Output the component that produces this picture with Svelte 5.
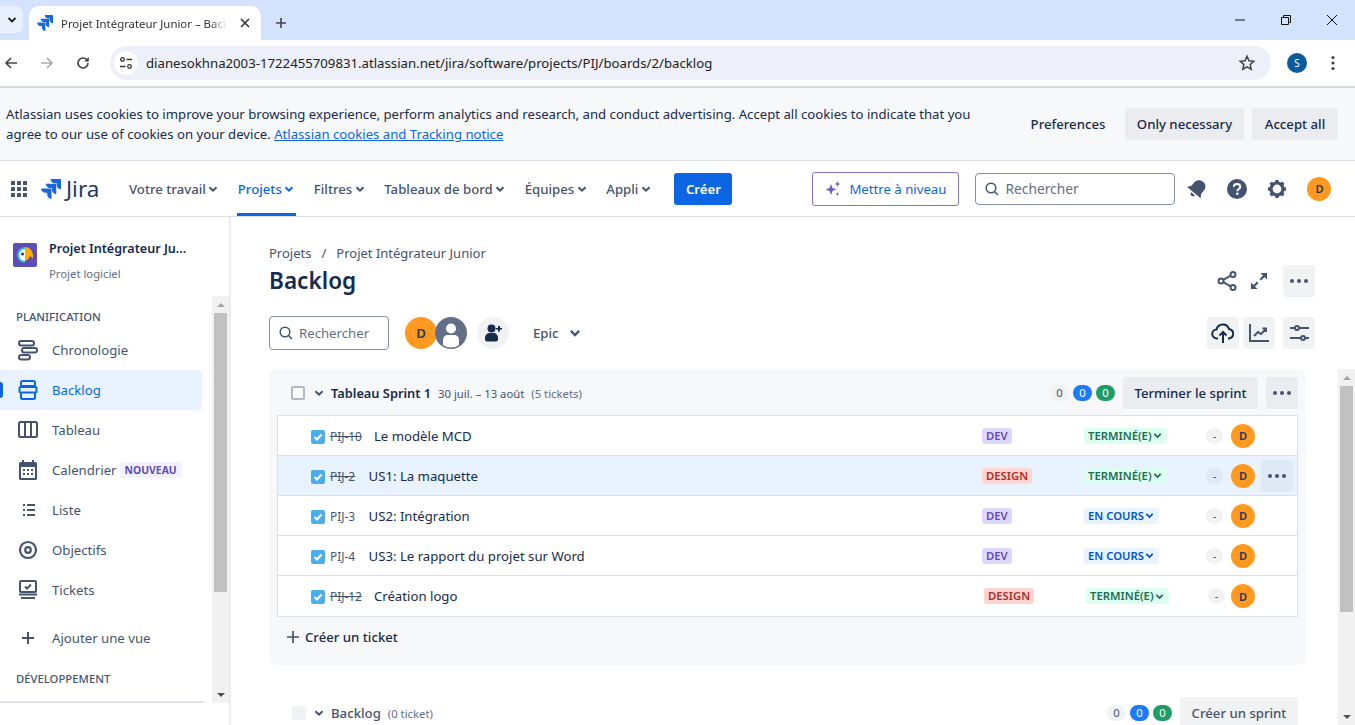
<script>
  const jira = `<path d="M23 0H11.5c0 2.9 2.4 5.2 5.2 5.2h2.1v2.1c0 2.9 2.4 5.2 5.2 5.2V1c0-.6-.4-1-1-1z"/><path transform="translate(-5.7 5.7)" d="M23 0H11.5c0 2.9 2.4 5.2 5.2 5.2h2.1v2.1c0 2.9 2.4 5.2 5.2 5.2V1c0-.6-.4-1-1-1z"/><path transform="translate(-11.4 11.4)" d="M23 0H11.5c0 2.9 2.4 5.2 5.2 5.2h2.1v2.1c0 2.9 2.4 5.2 5.2 5.2V1c0-.6-.4-1-1-1z"/>`;

  const topNav = [
    { label: "Votre travail" },
    { label: "Projets", active: true },
    { label: "Filtres" },
    { label: "Tableaux de bord" },
    { label: "Équipes" },
    { label: "Appli" }
  ];

  const views = [
    { label: "Chronologie", icon: `<g fill="none" stroke="currentColor" stroke-width="2"><rect x="3" y="3" width="15" height="4.5" rx="2.2"/><rect x="6" y="10" width="15" height="4.5" rx="2.2"/><rect x="3" y="17" width="11" height="4.5" rx="2.2"/></g>` },
    { label: "Backlog", active: true, icon: `<g fill="none" stroke="currentColor" stroke-width="2"><rect x="5" y="3" width="14" height="5" rx="1.5"/><rect x="3.5" y="9" width="17" height="5.5" rx="1"/><path d="M5 15v4.5a1.5 1.5 0 0 0 1.500 1.500h11a1.500 1.500 0 0 0 1.500-1.500V15"/></g>` },
    { label: "Tableau", icon: `<g fill="none" stroke="currentColor" stroke-width="2"><rect x="3" y="4" width="18" height="15" rx="1.500"/><path d="M9 4v15M15 4v15"/></g>` },
    { label: "Calendrier", badge: "NOUVEAU", icon: `<path fill="currentColor" d="M6 2h2v2h8V2h2v2h1.500A1.500 1.500 0 0 1 21 5.500v15a1.500 1.500 0 0 1-1.500 1.500h-15A1.500 1.500 0 0 1 3 20.500v-15A1.500 1.500 0 0 1 4.500 4H6zM5 9v11h14V9z"/><g fill="currentColor"><rect x="7" y="11" width="2" height="2"/><rect x="11" y="11" width="2" height="2"/><rect x="15" y="11" width="2" height="2"/><rect x="7" y="15" width="2" height="2"/><rect x="11" y="15" width="2" height="2"/><rect x="15" y="15" width="2" height="2"/></g>` },
    { label: "Liste", icon: `<g fill="currentColor"><rect x="7" y="6" width="2" height="2"/><rect x="7" y="11" width="2" height="2"/><rect x="7" y="16" width="2" height="2"/><rect x="11" y="6" width="8" height="2"/><rect x="11" y="11" width="8" height="2"/><rect x="11" y="16" width="8" height="2"/></g>` },
    { label: "Objectifs", icon: `<g fill="none" stroke="currentColor" stroke-width="2.200"><circle cx="12" cy="12" r="8"/><circle cx="12" cy="12" r="2.800"/></g>` },
    { label: "Tickets", icon: `<g fill="none" stroke="currentColor" stroke-width="2"><rect x="4" y="3" width="16" height="11" rx="1"/><path d="m9 8.500 2 2 4-4M3 16.500h18M5 20h14"/></g>` }
  ];

  const tickets = [
    { key: "PIJ-10", title: "Le modèle MCD", tag: "DEV", status: "TERMINÉ(E)", done: true },
    { key: "PIJ-2", title: "US1: La maquette", tag: "DESIGN", status: "TERMINÉ(E)", done: true, hover: true },
    { key: "PIJ-3", title: "US2: Intégration", tag: "DEV", status: "EN COURS" },
    { key: "PIJ-4", title: "US3: Le rapport du projet sur Word", tag: "DEV", status: "EN COURS" },
    { key: "PIJ-12", title: "Création logo", tag: "DESIGN", status: "TERMINÉ(E)", done: true, nudge: true }
  ];
</script>

{#snippet chev(size = 12)}
  <svg class="chev" width={size} height={size} viewBox="0 0 12 12"><path d="M2.500 4.200 6 7.700l3.500-3.500" fill="none" stroke="currentColor" stroke-width="2"/></svg>
{/snippet}

{#snippet dots()}
  <svg width="20" height="6" viewBox="0 0 20 6"><circle cx="3" cy="3" r="2" fill="currentColor"/><circle cx="10" cy="3" r="2" fill="currentColor"/><circle cx="17" cy="3" r="2" fill="currentColor"/></svg>
{/snippet}

{#snippet lens()}
  <svg width="16" height="16" viewBox="0 0 16 16"><circle cx="7" cy="7" r="4.800" fill="none" stroke="#44546f" stroke-width="1.500"/><path d="m10.500 10.500 3.500 3.500" stroke="#44546f" stroke-width="1.500"/></svg>
{/snippet}

{#snippet counts()}
  <div class="counts">
    <span class="count grey">0</span>
    <span class="count blue">0</span>
    <span class="count green">0</span>
  </div>
{/snippet}

{#snippet scrollbar(kind)}
  <div class="sb {kind}">
    <span class="arrow up"></span>
    <span class="thumb"></span>
    <span class="spring"></span>
    <span class="arrow down"></span>
  </div>
{/snippet}

<div class="app">
  <div class="tabstrip">
    <div class="tabsearch">
      <svg width="12" height="12" viewBox="0 0 12 12"><path d="M2.500 4 6 7.500 9.500 4" fill="none" stroke="#1f1f1f" stroke-width="1.800"/></svg>
    </div>
    <div class="tab">
      <svg class="favicon" width="16" height="16" viewBox="0 0 24 24" fill="#1868db">{@html jira}</svg>
      <span class="tabtitle">Projet Intégrateur Junior – Backlog</span>
      <svg width="12" height="12" viewBox="0 0 12 12"><path d="m2 2 8 8M10 2l-8 8" stroke="#333" stroke-width="1.600"/></svg>
    </div>
    <svg class="newtab" width="12" height="12" viewBox="0 0 12 12"><path d="M6 1v10M1 6h10" stroke="#444" stroke-width="1.600"/></svg>
    <div class="winctl">
      <svg width="12" height="12" viewBox="0 0 12 12"><path d="M1 6h10" stroke="#111" stroke-width="1"/></svg>
      <svg width="12" height="12" viewBox="0 0 12 12"><path d="M3.500 3V1.500h7v7H9M1.500 3.500h7v7h-7z" fill="none" stroke="#111"/></svg>
      <svg width="12" height="12" viewBox="0 0 12 12"><path d="m1 1 10 10M11 1 1 11" stroke="#111"/></svg>
    </div>
  </div>

  <div class="toolbar">
    <svg width="16" height="16" viewBox="0 0 16 16"><path d="M14 8H3M8 3 3 8l5 5" fill="none" stroke="#444" stroke-width="1.600"/></svg>
    <svg class="fwd" width="16" height="16" viewBox="0 0 16 16"><path d="M2 8h11M8 3l5 5-5 5" fill="none" stroke="#aaa" stroke-width="1.600"/></svg>
    <svg class="reload" width="16" height="16" viewBox="0 0 16 16"><path d="M13 8a5 5 0 1 1-1.500-3.600L13 6" fill="none" stroke="#444" stroke-width="1.600"/><path d="M13.800 2v4.600H9.200z" fill="#444"/></svg>
    <div class="omnibox">
      <span class="siteinfo">
        <svg width="14" height="14" viewBox="0 0 14 14" fill="none" stroke="#333" stroke-width="1.300"><circle cx="3.500" cy="3.500" r="1.800"/><path d="M7.500 3.500H13M1 10.500h5.500"/><circle cx="10.500" cy="10.500" r="1.800"/></svg>
      </span>
      <span class="url">dianesokhna2003-1722455709831.atlassian.net/jira/software/projects/PIJ/boards/2/backlog</span>
      <svg width="18" height="18" viewBox="0 0 18 18"><path d="m9 2.200 2 4.500 4.800.5-3.600 3.200 1 4.800L9 12.800l-4.200 2.400 1-4.800L2.200 7.200 7 6.700z" fill="none" stroke="#444" stroke-width="1.500"/></svg>
    </div>
    <span class="profile">S</span>
    <svg class="kebab" width="4" height="16" viewBox="0 0 4 16" fill="#444"><circle cx="2" cy="2.500" r="1.600"/><circle cx="2" cy="8" r="1.600"/><circle cx="2" cy="13.500" r="1.600"/></svg>
  </div>

  <div class="cookies">
    <p>Atlassian uses cookies to improve your browsing experience, perform analytics and research, and conduct advertising. Accept all cookies to indicate that you agree to our use of cookies on your device. <a href="#/cookies">Atlassian cookies and Tracking notice</a></p>
    <button class="plain">Preferences</button>
    <button class="only">Only necessary</button>
    <button class="accept">Accept all</button>
  </div>

  <header class="topnav">
    <svg class="apps" width="16" height="16" viewBox="0 0 16 16" fill="#44546f">
      {#each [0, 6, 12] as y}
        {#each [0, 6, 12] as x}
          <rect {x} {y} width="4" height="4" rx="0.5" />
        {/each}
      {/each}
    </svg>
    <svg class="logo" width="20" height="20" viewBox="0 0 24 24" fill="#1868db">{@html jira}</svg>
    <span class="wordmark">Jira</span>
    <nav>
      {#each topNav as item}
        <a href="#/nav" class:active={item.active}>{item.label}{@render chev(12)}</a>
      {/each}
    </nav>
    <button class="create">Créer</button>
    <button class="upgrade">
      <svg width="16" height="16" viewBox="0 0 16 16" fill="#6e5dc6"><path d="M6 3 7.500 7 11.500 8.500 7.500 10 6 14 4.500 10 .5 8.500 4.500 7zM12.500 0l.8 2.200 2.200.8-2.200.8-.8 2.200-.8-2.200L9.500 3l2.200-.8zM12.500 11l.6 1.400 1.400.6-1.400.6-.6 1.400-.6-1.400-1.400-.6 1.400-.6z"/></svg>
      Mettre à niveau
    </button>
    <div class="search global">{@render lens()}<span>Rechercher</span></div>
    <svg class="tool" width="22" height="22" viewBox="0 0 22 22" fill="#44546f"><g transform="rotate(40 11 11)"><path d="M11 1.500c3.800 0 6.300 2.800 6.300 6.300v4.400l2.500 3.600H2.200l2.500-3.600V7.800c0-3.500 2.500-6.300 6.300-6.300z"/><path d="M8.500 17.200h5a2.500 2.500 0 0 1-5 0z"/></g></svg>
    <svg class="tool" width="22" height="22" viewBox="0 0 22 22"><circle cx="11" cy="11" r="10" fill="#44546f"/><path d="M7.800 8.800C7.800 7 9.200 5.900 11 5.900s3.300 1.100 3.300 2.800c0 2.400-3 2.300-3 4.500" fill="none" stroke="#fff" stroke-width="2"/><circle cx="11.300" cy="15.800" r="1.300" fill="#fff"/></svg>
    <svg class="tool" width="22" height="22" viewBox="0 0 22 22"><circle cx="11" cy="11" r="6" fill="none" stroke="#44546f" stroke-width="3.200"/><path d="M11 2v3M11 17v3M2 11h3M17 11h3M4.600 4.600l2.200 2.200M15.200 15.200l2.200 2.200M17.400 4.600l-2.200 2.200M6.800 15.200l-2.200 2.200" stroke="#44546f" stroke-width="3.400"/></svg>
    <span class="avatar me">D</span>
  </header>

  <div class="body">
    <aside>
      <div class="project">
        <svg width="24" height="24" viewBox="0 0 24 24"><rect width="24" height="24" rx="2" fill="#5e4db2"/><path d="M12 4a8 8 0 0 0 0 16z" fill="#2abbd0"/><path d="M12 6a6 6 0 0 0 0 12z" fill="#fff"/><path d="M12 4c4.300 0 7.300 3 8 8v3.500L17 13c-1 2.500-2.800 4.500-5 5z" fill="#ffab00"/><circle cx="9.500" cy="11" r="1.500" fill="#253858"/></svg>
        <div>
          <strong>Projet Intégrateur Ju...</strong>
          <small>Projet logiciel</small>
        </div>
      </div>
      <div class="sidescroll">
        <div class="sidelist">
          <h4 class="plan">PLANIFICATION</h4>
          {#each views as v}
            <a href="#/view" class="view" class:active={v.active}>
              <svg width="24" height="24" viewBox="0 0 24 24">{@html v.icon}</svg>
              <span>{v.label}</span>
              {#if v.badge}<em>{v.badge}</em>{/if}
            </a>
          {/each}
          <a href="#/add" class="view add">
            <svg width="24" height="24" viewBox="0 0 24 24"><path d="M12 6v12M6 12h12" stroke="currentColor" stroke-width="2"/></svg>
            <span>Ajouter une vue</span>
          </a>
          <h4 class="devhead">DÉVELOPPEMENT</h4>
        </div>
        {@render scrollbar("side")}
      </div>
      <div class="sidefoot"></div>
    </aside>

    <main>
      <section class="pagehead">
        <div class="crumbs">Projets<i>/</i>Projet Intégrateur Junior</div>
        <div class="titlerow">
          <h1>Backlog</h1>
          <div class="titletools">
            <svg width="24" height="24" viewBox="0 0 24 24" fill="none" stroke="#44546f" stroke-width="2"><circle cx="18" cy="5.500" r="2.500"/><circle cx="6" cy="12" r="2.500"/><circle cx="18" cy="18.500" r="2.500"/><path d="m8.200 10.800 7.600-4.100M8.200 13.200l7.600 4.100"/></svg>
            <svg class="expand" width="24" height="24" viewBox="0 0 24 24" fill="#44546f"><path d="M13.500 4H20v6.500L17.500 8 14 11.500 12.500 10 16 6.500zM10.500 20H4v-6.500L6.500 16 10 12.500l1.500 1.500L8 17.500z"/></svg>
            <button class="square">{@render dots()}</button>
          </div>
        </div>
        <div class="filters">
          <div class="search">{@render lens()}<span>Rechercher</span></div>
          <div class="people">
            <span class="avatar big">D</span>
            <span class="avatar big ghost">
              <svg width="32" height="32" viewBox="0 0 32 32"><circle cx="16" cy="16" r="16" fill="#626f86"/><circle cx="16" cy="11.500" r="5" fill="#fff"/><path d="M8 28v-5c0-3 2-5 5-5h6c3 0 5 2 5 5v5a14 14 0 0 1-16 0z" fill="#fff"/></svg>
            </span>
          </div>
          <span class="addperson">
            <svg width="20" height="20" viewBox="0 0 20 20" fill="#172b4d"><circle cx="8.500" cy="5.500" r="4"/><path d="M2 15c0-3 2-5 5-5h3c3 0 5 2 5 5v1.500a2 2 0 0 1-2 2H4a2 2 0 0 1-2-2z"/><path d="M15 3h2v2h2v1.500h-2v2h-2v-2h-2V5h2z"/></svg>
          </span>
          <span class="epic">Epic{@render chev(14)}</span>
          <div class="spacer"></div>
          <button class="square dark">
            <svg width="24" height="24" viewBox="0 0 24 24" fill="none" stroke="#172b4d" stroke-width="2"><path d="M7 17.500H6A4.500 4.500 0 0 1 5.500 8.500 6.500 6.500 0 0 1 18 8a4.800 4.800 0 0 1 0 9.500h-1"/><path d="M12 22V11M8.500 14.500 12 11l3.500 3.500"/></svg>
          </button>
          <button class="square chart">
            <svg width="24" height="24" viewBox="0 0 24 24" fill="none" stroke="#44546f" stroke-width="2"><path d="M3 3v17h19"/><path d="m7 15 4-4 3 2 5-5M15.500 7.500H19V11"/></svg>
          </button>
          <button class="square sliders">
            <svg width="24" height="24" viewBox="0 0 24 24" fill="none" stroke="#44546f" stroke-width="2"><path d="M3 7h5M12 7h10M3 17h11M18 17h4"/><circle cx="10" cy="7" r="2"/><circle cx="16" cy="17" r="2"/></svg>
          </button>
        </div>
      </section>

      <div class="scroller">
        <div class="board">
          <section class="sprint">
            <div class="sprinthead">
              <span class="check off"></span>
              {@render chev(12)}
              <strong>Tableau Sprint 1</strong>
              <span class="dates">30 juil. – 13 août</span>
              <span class="num">(5 tickets)</span>
              <div class="spacer"></div>
              {@render counts()}
              <button class="finish">Terminer le sprint</button>
              <button class="square grey">{@render dots()}</button>
            </div>
            <div class="rows">
              {#each tickets as t}
                <div class="row" class:hover={t.hover} class:nudge={t.nudge}>
                  <div class="main-cell">
                    <span class="check on"><svg width="14" height="14" viewBox="0 0 14 14"><path d="m3.500 7 2.500 2.500 4.500-5" fill="none" stroke="#fff" stroke-width="2"/></svg></span>
                    <span class="key" class:strike={t.done}>{t.key}</span>
                    <span class="title">{t.title}</span>
                  </div>
                  <div class="cell"><span class="tag {t.tag.toLowerCase()}">{t.tag}</span></div>
                  <div class="cell"><span class="status" class:done={t.done}>{t.status}{@render chev(11)}</span></div>
                  <div class="cell"><span class="dash">-</span></div>
                  <span class="avatar">D</span>
                  {#if t.hover}<button class="square rowmore">{@render dots()}</button>{/if}
                </div>
              {/each}
            </div>
            <div class="newticket">
              <svg width="14" height="14" viewBox="0 0 14 14"><path d="M7 1v12M1 7h12" stroke="#44546f" stroke-width="1.700"/></svg>
              Créer un ticket
            </div>
          </section>

          <section class="backlog">
            <span class="check faint"></span>
            {@render chev(12)}
            <strong>Backlog</strong>
            <span class="num">(0 ticket)</span>
            <div class="spacer"></div>
            {@render counts()}
            <button class="newsprint">Créer un sprint</button>
          </section>
        </div>
        {@render scrollbar("page")}
      </div>
    </main>
  </div>
</div>

<style>
  :global(body) {
    background: #fff;
    overflow: hidden;
  }

  .app {
    height: 725px;
    display: flex;
    flex-direction: column;
    overflow: hidden;
    font-family: "Noto Sans", "Open Sans", sans-serif;
    font-size: 13.2px;
    color: #172b4d;
  }

  button {
    font: inherit;
    border: none;
    cursor: pointer;
  }

  h1, h4, p {
    margin: 0;
  }

  svg {
    display: block;
    flex: none;
  }

  .spacer {
    flex: 1;
  }

  /* browser chrome */
  .tabstrip {
    height: 40px;
    flex: none;
    display: flex;
    align-items: flex-end;
    background: #d3e3fd;
  }
  .tabsearch {
    width: 23px;
    height: 27px;
    margin-bottom: 7px;
    background: #e8f0fe;
    border-radius: 0 8px 8px 0;
    display: flex;
    align-items: center;
    justify-content: center;
  }
  .tab {
    width: 232px;
    height: 34px;
    margin-left: 6px;
    padding: 0 10px 0 8px;
    box-sizing: border-box;
    background: #fff;
    border-radius: 10px 10px 0 0;
    display: flex;
    align-items: center;
    color: #333;
  }
  .tabtitle {
    width: 166px;
    margin: 0 12px 0 8px;
    font-size: 11.4px;
    white-space: nowrap;
    overflow: hidden;
    -webkit-mask-image: linear-gradient(90deg, #000 90%, transparent);
    mask-image: linear-gradient(90deg, #000 90%, transparent);
  }
  .newtab {
    margin: 0 0 11px 14px;
  }
  .winctl {
    margin: 0 17px 14px auto;
    display: flex;
    gap: 34px;
  }

  .toolbar {
    height: 48px;
    flex: none;
    box-sizing: border-box;
    padding: 0 0 0 3px;
    background: #fff;
    border-bottom: 2px solid #dadada;
    display: flex;
    align-items: center;
  }
  .fwd {
    margin-left: 20px;
  }
  .reload {
    margin-left: 20px;
  }
  .omnibox {
    width: 1161px;
    height: 34px;
    margin-left: 19px;
    box-sizing: border-box;
    padding: 0 15px 0 4px;
    background: #edf0f8;
    border-radius: 17px;
    display: flex;
    align-items: center;
  }
  .siteinfo {
    width: 24px;
    height: 24px;
    border-radius: 50%;
    background: #fff;
    display: flex;
    align-items: center;
    justify-content: center;
  }
  .url {
    flex: 1;
    margin-left: 8px;
    color: #222;
  }
  .profile {
    width: 20px;
    height: 20px;
    margin-left: 16px;
    border-radius: 50%;
    background: #0b5a9e;
    color: #fff;
    font-size: 10px;
    display: flex;
    align-items: center;
    justify-content: center;
  }
  .kebab {
    margin-left: 24px;
  }

  .cookies {
    height: 73px;
    flex: none;
    box-sizing: border-box;
    padding: 0 17px 0 6px;
    background: #f7f8f9;
    border-bottom: 1px solid #dcdfe4;
    display: flex;
    align-items: center;
  }
  .cookies p {
    width: 985px;
    line-height: 20px;
    color: #172b4d;
    font-size: 13.17px;
  }
  .cookies a {
    color: #0c66e4;
  }
  .cookies button {
    height: 32px;
    border-radius: 3px;
    background: #ebecf0;
    color: #172b4d;
    font-weight: 500;
  }
  .cookies .plain {
    width: 94px;
    margin-left: 30px;
    background: none;
  }
  .cookies .only {
    width: 119px;
    margin-left: 10px;
  }
  .cookies .accept {
    width: 86px;
    margin-left: 8px;
  }

  /* jira top bar */
  .topnav {
    height: 56px;
    flex: none;
    box-sizing: border-box;
    border-bottom: 1px solid #dcdfe4;
    display: flex;
    align-items: center;
    padding-left: 11px;
  }
  .logo {
    margin-left: 14px;
  }
  .wordmark {
    margin-left: 5px;
    font-size: 22.4px;
    color: #253858;
    width: 36px;
  }
  nav {
    margin-left: 26px;
    height: 100%;
    display: flex;
    gap: 16.5px;
  }
  nav a {
    display: flex;
    align-items: center;
    gap: 1.5px;
    color: #44546f;
    text-decoration: none;
    font-weight: 500;
    white-space: nowrap;
    box-sizing: border-box;
    padding: 3px 1px 0;
    border-bottom: 3px solid transparent;
  }
  nav a.active {
    color: #0c66e4;
    border-bottom-color: #0c66e4;
  }
  .create {
    width: 58px;
    height: 32px;
    margin-left: 21.5px;
    background: #0c66e4;
    color: #fff;
    border-radius: 3px;
    font-weight: 600;
  }
  .upgrade {
    width: 147px;
    height: 34px;
    margin-left: 80px;
    background: #fff;
    border: 1px solid #8270db;
    border-radius: 3px;
    color: #0c66e4;
    display: flex;
    align-items: center;
    justify-content: center;
    gap: 8px;
  }
  .search {
    width: 120px;
    height: 34px;
    box-sizing: border-box;
    border: 1px solid #8590a2;
    border-radius: 4px;
    display: flex;
    align-items: center;
    gap: 5px;
    padding-left: 8px;
    color: #626f86;
  }
  .search.global {
    width: 200px;
    height: 32px;
    margin-left: 16px;
    margin-right: 11px;
    font-size: 13.8px;
  }
  .tool {
    margin-right: 18px;
  }
  .avatar {
    width: 24px;
    height: 24px;
    flex: none;
    border-radius: 50%;
    background: #ff991f;
    color: #253858;
    font-size: 11px;
    font-weight: 600;
    display: flex;
    align-items: center;
    justify-content: center;
  }
  .avatar.me {
    margin-left: 1px;
  }

  .body {
    flex: 1;
    min-height: 0;
    display: flex;
  }

  /* sidebar */
  aside {
    width: 231px;
    flex: none;
    box-sizing: border-box;
    border-right: 2px solid #ebecf0;
    display: flex;
    flex-direction: column;
  }
  .project {
    height: 79px;
    flex: none;
    box-sizing: border-box;
    padding: 26px 0 0 13px;
    display: flex;
    gap: 12px;
  }
  .project strong {
    display: block;
    font-size: 12.6px;
    font-weight: 600;
    line-height: 12px;
    white-space: nowrap;
  }
  .project small {
    display: block;
    margin-top: 12px;
    font-size: 11.3px;
    line-height: 14px;
    color: #626f86;
  }
  .sidescroll {
    height: 407px;
    flex: none;
    display: flex;
  }
  .sidelist {
    width: 212px;
    flex: none;
    overflow: hidden;
  }
  .sidelist h4 {
    font-size: 11.3px;
    font-weight: 500;
    color: #44546f;
    padding-left: 16px;
    line-height: 16px;
  }
  .plan {
    margin-top: 13px;
    margin-bottom: 5px;
  }
  .devhead {
    margin-top: 13px;
  }
  .view {
    height: 40px;
    width: 202px;
    box-sizing: border-box;
    padding-left: 16px;
    display: flex;
    align-items: center;
    gap: 12px;
    color: #44546f;
    text-decoration: none;
    position: relative;
    border-radius: 0 4px 4px 0;
  }
  .view.active {
    background: #e9f2ff;
    color: #0c66e4;
  }
  .view.active::before {
    content: "";
    position: absolute;
    left: 0;
    top: 12px;
    width: 3px;
    height: 16px;
    background: #0c66e4;
    border-radius: 0 3px 3px 0;
  }
  .view em {
    margin-left: -9px;
    padding: 0 5px;
    height: 16px;
    line-height: 16px;
    font-style: normal;
    font-size: 10.4px;
    font-weight: 700;
    color: #5e4db2;
    background: #f3f0ff;
    border-radius: 3px;
  }
  .view.add {
    margin-top: 8px;
  }
  .sidefoot {
    width: 204px;
    height: 2px;
    background: #dfe1e6;
    margin-top: -2px;
  }

  /* fake native scrollbars */
  .sb {
    width: 17px;
    flex: none;
    background: #f1f1f1;
    display: flex;
    flex-direction: column;
  }
  .sb .arrow {
    height: 17px;
    flex: none;
    display: flex;
    align-items: center;
    justify-content: center;
  }
  .sb .arrow::after {
    content: "";
    border-left: 4px solid transparent;
    border-right: 4px solid transparent;
  }
  .sb .up::after {
    border-bottom: 4px solid #a3a3a3;
  }
  .sb .down::after {
    border-top: 4px solid #505050;
  }
  .sb .thumb {
    margin: 0 2px;
    background: #c1c1c1;
  }
  .sb.side .thumb {
    height: 279px;
  }
  .sb.page .thumb {
    height: 226px;
  }
  .sb .spring {
    flex: 1;
  }

  /* page */
  main {
    flex: 1;
    min-width: 0;
    display: flex;
    flex-direction: column;
  }
  .pagehead {
    height: 152px;
    flex: none;
    box-sizing: border-box;
    padding: 26px 40px 0 38px;
  }
  .crumbs {
    color: #44546f;
    line-height: 20px;
    font-size: 13px;
  }
  .crumbs i {
    font-style: normal;
    margin: 0 10px;
  }
  .titlerow {
    height: 32px;
    margin-top: 2px;
    display: flex;
    align-items: center;
    justify-content: space-between;
  }
  h1 {
    font-size: 22.6px;
    font-weight: 600;
    line-height: 32px;
    color: #172b4d;
  }
  .titletools {
    display: flex;
    align-items: center;
    gap: 8px;
  }
  .expand {
    margin-right: 4px;
  }
  .square {
    width: 32px;
    height: 32px;
    flex: none;
    padding: 0;
    background: #f1f2f4;
    border-radius: 3px;
    color: #44546f;
    display: flex;
    align-items: center;
    justify-content: center;
  }
  .square.grey {
    background: #ebecf0;
  }
  .filters {
    margin-top: 19px;
    display: flex;
    align-items: center;
  }
  .people {
    margin-left: 16px;
    display: flex;
  }
  .avatar.big {
    width: 32px;
    height: 32px;
    font-size: 13.2px;
  }
  .avatar.ghost {
    margin-left: -2px;
    background: #fff;
  }
  .addperson {
    width: 32px;
    height: 32px;
    margin-left: 10px;
    border-radius: 50%;
    background: #f1f2f4;
    display: flex;
    align-items: center;
    justify-content: center;
  }
  .epic {
    margin-left: 24px;
    display: flex;
    align-items: center;
    gap: 9px;
    color: #44546f;
    font-weight: 500;
  }
  .square.chart {
    margin: 0 8px 0 4px;
  }

  .scroller {
    flex: 1;
    min-height: 0;
    display: flex;
  }
  .board {
    flex: 1;
    min-width: 0;
    padding: 0 32px 0 38px;
    overflow: hidden;
  }
  .sprint {
    height: 296px;
    box-sizing: border-box;
    padding: 0 8px;
    background: #f7f8f9;
    border-radius: 8px;
  }
  .sprinthead {
    height: 46px;
    box-sizing: border-box;
    padding: 2px 0 0 14px;
    display: flex;
    align-items: center;
  }
  .check {
    width: 14px;
    height: 14px;
    flex: none;
    box-sizing: border-box;
    border-radius: 2px;
  }
  .check.off {
    background: #fff;
    border: 2px solid #b3b9c4;
  }
  .check.on {
    background: #4baee8;
    margin-top: 2px;
  }
  .check.faint {
    background: #f1f2f4;
    margin-left: 1px;
  }
  .sprinthead .chev {
    margin-left: 8px;
    color: #44546f;
  }
  .backlog .chev {
    margin-left: 7px;
    color: #44546f;
  }
  .sprinthead strong {
    margin-left: 6px;
    font-size: 12.8px;
    font-weight: 600;
  }
  .dates {
    margin-left: 7px;
    font-size: 11.3px;
    color: #44546f;
  }
  .num {
    margin-left: 7px;
    font-size: 11.3px;
    color: #626f86;
  }
  .counts {
    display: flex;
    gap: 4px;
  }
  .count {
    width: 19px;
    height: 16px;
    border-radius: 8px;
    font-size: 11.3px;
    line-height: 16px;
    text-align: center;
    background: #f1f2f4;
    color: #44546f;
  }
  .count.blue {
    background: #1d7afc;
    color: #fff;
  }
  .count.green {
    background: #1f9d65;
    color: #fff;
  }
  .finish {
    width: 135px;
    height: 32px;
    margin: 0 8px;
    background: #ebecf0;
    border-radius: 3px;
    color: #172b4d;
    font-weight: 500;
  }
  .rows {
    background: #fff;
    border: 1px solid #dcdfe4;
  }
  .row {
    height: 40px;
    box-sizing: border-box;
    display: grid;
    grid-template-columns: 704px 102px 122px 25px 30px 32px;
    align-items: center;
    border-top: 1px solid #dcdfe4;
  }
  .row:first-child {
    height: 39px;
    border-top: none;
  }
  .row:last-child {
    height: 41px;
  }
  .row.hover {
    background: #e9f2ff;
  }
  .main-cell {
    display: flex;
    align-items: center;
    padding-left: 33px;
  }
  .cell {
    display: flex;
    align-items: center;
  }
  .key {
    min-width: 26.5px;
    margin: 0 12px 0 5px;
    font-size: 11.9px;
    color: #44546f;
  }
  .key.strike {
    text-decoration: line-through;
  }
  .title {
    color: #172b4d;
  }
  .tag, .status {
    display: inline-flex;
    align-items: center;
    height: 16px;
    padding: 0 4px;
    border-radius: 3px;
    font-size: 11.3px;
    font-weight: 600;
    line-height: 16px;
  }
  .tag.dev {
    background: #dfd8fd;
    color: #5e4db2;
  }
  .tag.design {
    background: #ffd5d2;
    color: #ae2e24;
  }
  .status {
    background: #e9f2ff;
    color: #0055cc;
  }
  .status.done {
    background: #dcfff1;
    color: #216e4e;
  }
  .dash {
    display: block;
    width: 17px;
    height: 16px;
    line-height: 16px;
    border-radius: 8px;
    background: #f1f2f4;
    text-align: center;
    font-size: 11.3px;
    color: #44546f;
  }
  .row.hover .dash {
    background: #dfe8f5;
  }
  .row.nudge .tag, .row.nudge .status, .row.nudge .dash {
    margin-left: 2px;
  }
  .rowmore {
    background: #dfe8f5;
  }
  .newticket {
    height: 40px;
    padding-left: 9px;
    display: flex;
    align-items: center;
    gap: 5px;
    font-weight: 500;
  }
  .backlog {
    margin-top: 32px;
    height: 32px;
    display: flex;
    align-items: center;
    padding: 0 8px 0 22px;
  }
  .backlog strong {
    margin-left: 6px;
    font-size: 13.2px;
    font-weight: 500;
    color: #44546f;
  }
  .newsprint {
    width: 118px;
    height: 32px;
    margin-left: 8px;
    background: #f1f2f4;
    border-radius: 3px;
    color: #44546f;
    font-weight: 500;
  }
</style>
